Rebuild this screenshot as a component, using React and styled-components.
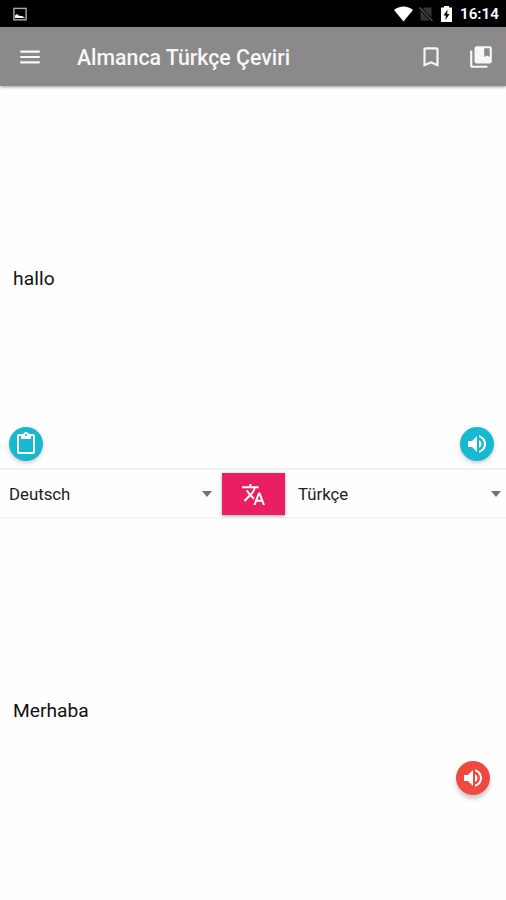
import React from "react";
import styled, { createGlobalStyle } from "styled-components";
import {
  MdMenu,
  MdBookmarkBorder,
  MdCollectionsBookmark,
  MdTranslate,
  MdVolumeUp,
  MdContentPaste,
} from "react-icons/md";

const GlobalStyle = createGlobalStyle`
  * { box-sizing: border-box; }
  body { margin: 0; background: #fff; font-family: Roboto, sans-serif; }
  svg { display: block; flex: none; }
`;

const Screen = styled.div`
  display: flex;
  flex-direction: column;
  width: 506px;
  height: 900px;
  overflow: hidden;
  background: #fefefe;
  color: #111;
`;

const StatusBar = styled.div`
  display: flex;
  align-items: center;
  justify-content: space-between;
  flex: none;
  height: 27px;
  padding: 0 8px 0 13px;
  background: #000;
  color: #fff;
`;

const StatusIcons = styled.div`
  display: flex;
  align-items: center;
`;

const Wifi = styled.svg`
  margin-right: 6px;
`;

const NoSim = styled.svg`
  margin-right: 8px;
`;

const Clock = styled.span`
  width: 38px;
  margin-left: 8px;
  padding-top: 2px;
  font-size: 15.2px;
  font-weight: 600;
  line-height: 25px;
  white-space: nowrap;
`;

const AppBar = styled.header`
  display: flex;
  align-items: center;
  flex: none;
  height: 59px;
  padding: 0 12px 0 17px;
  background: #8b8989;
  box-shadow: 0 1px 3px rgba(0, 0, 0, 0.4);
  color: #f7f7f7;
  z-index: 1;
`;

const Title = styled.h1`
  flex: 1;
  margin: 2px 0 0 34px;
  font-size: 21.3px;
  font-weight: 500;
  line-height: 30px;
  white-space: nowrap;
`;

const IconButton = styled.button`
  display: flex;
  padding: 0;
  margin: 0 0 0 ${(p) => p.$gap || 0}px;
  border: 0;
  background: none;
  color: inherit;
`;

const Panel = styled.section`
  display: flex;
  flex-direction: column;
  flex: none;
  height: ${(p) => p.$height}px;
`;

const PanelText = styled.p`
  margin: ${(p) => p.$top}px 0 0 13px;
  font-size: 19.2px;
  line-height: 26px;
  letter-spacing: ${(p) => p.$spacing || 0}px;
`;

const PanelActions = styled.div`
  display: flex;
  justify-content: space-between;
  margin: ${(p) => p.$top}px ${(p) => p.$right}px 0 9px;
`;

const RoundButton = styled.button`
  display: flex;
  align-items: center;
  justify-content: center;
  width: 34px;
  height: 34px;
  margin-left: ${(p) => (p.$end ? "auto" : 0)};
  padding: 0 1px 1px 0;
  border: 0;
  border-radius: 50%;
  background: ${(p) => p.$color};
  color: #fff;
  box-shadow: 0 ${(p) => p.$depth || 2}px 4px rgba(0, 0, 0, 0.2);
`;

const LanguageBar = styled.div`
  display: flex;
  align-items: center;
  flex: none;
  height: 51px;
  border-top: 2px solid #f1f1f1;
  border-bottom: 2px solid #f6f6f6;
`;

const LanguageSelect = styled.div`
  display: flex;
  align-items: center;
  justify-content: space-between;
  width: ${(p) => p.$width}px;
  padding: 1px ${(p) => p.$right}px 0 ${(p) => p.$left}px;
  font-size: 16.8px;
  line-height: 24px;
  color: #222;
`;

const Caret = styled.span`
  border: 5.5px solid transparent;
  border-top: 6px solid #737373;
  border-bottom: 0;
`;

const TranslateButton = styled.button`
  display: flex;
  align-items: center;
  justify-content: center;
  width: 63px;
  height: 42px;
  margin-top: 1px;
  padding: 0;
  border: 0;
  background: #e91e63;
  color: #fff;
  box-shadow: 0 1px 3px rgba(0, 0, 0, 0.35);
`;

export default function App() {
  return (
    <>
      <GlobalStyle />
      <Screen>
        <StatusBar>
          <svg width="14" height="14" viewBox="0 0 14 14">
            <rect x="0.9" y="1.4" width="12.2" height="11.4" fill="none" stroke="#aaa" strokeWidth="1.4" />
            <path d="M2 11V8.5l2-1.6 2 1.8 3 .3 3 1.8V11z" fill="#fff" />
          </svg>
          <StatusIcons>
            <Wifi width="19" height="16" viewBox="0 0 19 16">
              <path d="M0 4C5.5-.7 13.500-.7 19 4L9.500 15.500z" fill="#fff" />
            </Wifi>
            <NoSim width="14" height="16" viewBox="0 0 14 16">
              <path d="M5 1.500h7.500v13H1.500V5z" fill="#353535" />
              <path d="M.5 1.500l13 13.500" stroke="#000" strokeWidth="3" />
              <path d="M.5 1.500l13 13.500" stroke="#555" strokeWidth="1.300" />
            </NoSim>
            <svg width="11" height="16" viewBox="0 0 11 16">
              <path d="M3 0h5v1.500h3V16H0V1.500h3z" fill="#fff" />
              <path d="M6.600 3.500L2.500 9.500h2.300L4.500 14l4-6H6.100z" fill="#000" />
            </svg>
            <Clock>16:14</Clock>
          </StatusIcons>
        </StatusBar>

        <AppBar>
          <IconButton aria-label="Menu"><MdMenu size={26} /></IconButton>
          <Title>Almanca Türkçe Çeviri</Title>
          <IconButton aria-label="Bookmark"><MdBookmarkBorder size={26} /></IconButton>
          <IconButton aria-label="Saved" $gap={24}><MdCollectionsBookmark size={26} /></IconButton>
        </AppBar>

        <Panel $height={382}>
          <PanelText $top={180} $spacing={0.1}>hallo</PanelText>
          <PanelActions $top={135} $right={12}>
            <RoundButton $color="#16b9d0" aria-label="Paste"><MdContentPaste size={24} /></RoundButton>
            <RoundButton $color="#16b9d0" aria-label="Listen"><MdVolumeUp size={24} /></RoundButton>
          </PanelActions>
        </Panel>

        <LanguageBar>
          <LanguageSelect $width={222} $left={9} $right={10}>Deutsch<Caret /></LanguageSelect>
          <TranslateButton aria-label="Translate"><MdTranslate size={25} /></TranslateButton>
          <LanguageSelect $width={221} $left={13} $right={5}>Türkçe<Caret /></LanguageSelect>
        </LanguageBar>

        <Panel $height={381}>
          <PanelText $top={179}>Merhaba</PanelText>
          <PanelActions $top={37} $right={16}>
            <RoundButton $end $depth={4} $color="#ef4a40" aria-label="Listen"><MdVolumeUp size={24} /></RoundButton>
          </PanelActions>
        </Panel>
      </Screen>
    </>
  );
}
